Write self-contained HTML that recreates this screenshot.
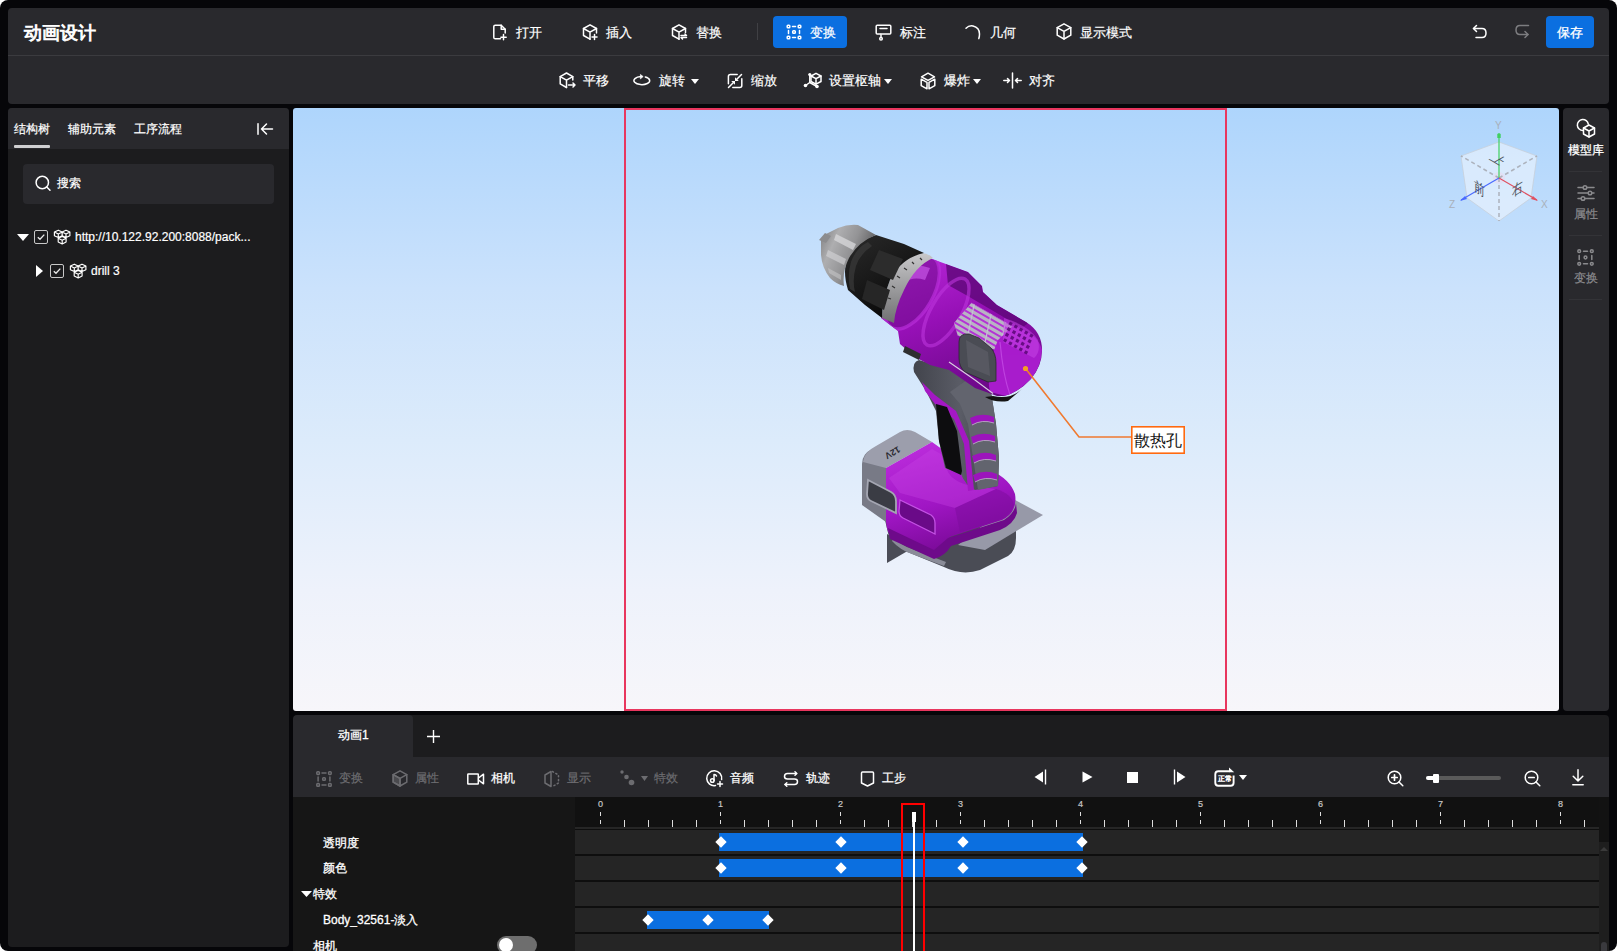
<!DOCTYPE html>
<html><head><meta charset="utf-8">
<style>
html,body{margin:0;padding:0;width:1617px;height:951px;overflow:hidden;background:#ffffff;}
body{font-family:"Liberation Sans",sans-serif;color:#fff;}
#win{position:absolute;left:0;top:0;width:1617px;height:951px;background:#060609;border-radius:8px;overflow:hidden;}
.abs{position:absolute;}
.t{position:absolute;white-space:nowrap;line-height:1;-webkit-text-stroke:0.2px currentColor;}
.b{-webkit-text-stroke:0.35px currentColor;}
.panel{position:absolute;background:#29292d;}
svg{position:absolute;overflow:visible;}
.ic{fill:none;stroke:#fff;stroke-width:1.5;stroke-linecap:round;stroke-linejoin:round;}
</style></head><body>
<div id="win">
<!--HEADER-->
  <div class="panel" style="left:8px;top:8px;width:1601px;height:96px;border-radius:4px;"></div>
  <div class="abs" style="left:8px;top:55px;width:1601px;height:1px;background:#3b3b3f;"></div>
  <div class="t" style="left:24px;top:24px;font-size:18px;-webkit-text-stroke:0.9px #fff;">动画设计</div>
  <!-- row1 -->
  <svg style="left:492px;top:24px" width="16" height="16" viewBox="0 0 16 16"><g class="ic">
    <path d="M8.5 14.8H3.2Q1.8 14.8 1.8 13.4V2.6Q1.8 1.2 3.2 1.2H9.2L13.2 5.2V9"/><path d="M9.2 1.2V5.2H13.2"/><path d="M11.5 10.5V15.8M8.9 13.2H14.2"/></g></svg>
  <div class="t" style="left:516px;top:26px;font-size:13px;">打开</div>
  <svg style="left:582px;top:24px" width="16" height="16" viewBox="0 0 16 16"><g class="ic">
    <path d="M8 15.2L1.5 11.5V4.5L8 0.8L14.5 4.5V9"/><path d="M1.5 4.5L8 8.2L14.5 4.5M8 8.2V15.2"/><path d="M12.5 10.5V15.5M10 13H15"/></g></svg>
  <div class="t" style="left:606px;top:26px;font-size:13px;">插入</div>
  <svg style="left:671px;top:24px" width="16" height="16" viewBox="0 0 16 16"><g class="ic">
    <path d="M8 15.2L1.5 11.5V4.5L8 0.8L14.5 4.5V8.5"/><path d="M1.5 4.5L8 8.2L14.5 4.5M8 8.2V15.2"/><path d="M10 11.5H15.5L14 10M15.5 13.5H10L11.5 15"/></g></svg>
  <div class="t" style="left:696px;top:26px;font-size:13px;">替换</div>
  <div class="abs" style="left:757px;top:23px;width:1px;height:17px;background:#404044;"></div>
  <div class="abs" style="left:773px;top:16px;width:74px;height:32px;background:#0b6fe0;border-radius:4px;"></div>
  <svg style="left:786px;top:24px" width="16" height="16" viewBox="0 0 16 16"><g class="ic" stroke-width="1.4">
    <rect x="1.2" y="1.2" width="2.6" height="2.6" rx="0.8"/><rect x="12.2" y="1.2" width="2.6" height="2.6" rx="0.8"/><rect x="1.2" y="12.2" width="2.6" height="2.6" rx="0.8"/><rect x="12.2" y="12.2" width="2.6" height="2.6" rx="0.8"/><rect x="6.7" y="6.7" width="2.6" height="2.6" rx="0.8"/>
    <path d="M6.5 2.5H9.5M6.5 13.5H9.5M2.5 6.5V9.5M13.5 6.5V9.5"/></g></svg>
  <div class="t" style="left:810px;top:26px;font-size:13px;">变换</div>
  <svg style="left:875px;top:24px" width="17" height="17" viewBox="0 0 17 17"><g class="ic">
    <path d="M5.5 10H2.2Q1.2 10 1.2 9V2.2Q1.2 1.2 2.2 1.2H14.8Q15.8 1.2 15.8 2.2V9Q15.8 10 14.8 10H6.8"/><path d="M5 4.5H12"/><path d="M6 10V13"/><circle cx="6" cy="14.8" r="1.3"/></g></svg>
  <div class="t" style="left:900px;top:26px;font-size:13px;">标注</div>
  <svg style="left:965px;top:24px" width="16" height="16" viewBox="0 0 16 16"><g class="ic">
    <path d="M1 4.3Q4 1.2 8 2Q14.5 3.5 14.5 10Q14.5 12.8 13.8 14.6"/></g></svg>
  <div class="t" style="left:990px;top:26px;font-size:13px;">几何</div>
  <svg style="left:1056px;top:23px" width="16" height="17" viewBox="0 0 16 17"><g class="ic">
    <path d="M8 16L1.2 12.2V4.6L8 0.8L14.8 4.6V12.2Z"/><path d="M1.2 4.6L8 8.4L14.8 4.6M8 8.4V16"/></g></svg>
  <div class="t" style="left:1080px;top:26px;font-size:13px;">显示模式</div>
  <!-- right controls -->
  <svg style="left:1472px;top:24px" width="16" height="16" viewBox="0 0 16 16"><g class="ic" stroke-width="1.4">
    <path d="M4.5 1.5L1.5 4.5L4.5 7.5"/><path d="M1.5 4.5H10Q14 4.5 14 9Q14 13.5 10 13.5H4"/></g></svg>
  <svg style="left:1514px;top:24px" width="16" height="16" viewBox="0 0 16 16"><g class="ic" style="stroke:#7d7d80" stroke-width="1.4">
    <path d="M14.5 1.5H6Q2 1.5 2 6Q2 10.5 6 10.5H14"/><path d="M11 7.5L14 10.5L11 13.5"/></g></svg>
  <div class="abs" style="left:1546px;top:16px;width:48px;height:32px;background:#0b6fe0;border-radius:4px;"></div>
  <div class="t" style="left:1557px;top:26px;font-size:13px;-webkit-text-stroke:0.3px #fff;">保存</div>
  <!-- row2 -->
  <svg style="left:559px;top:72px" width="17" height="17" viewBox="0 0 17 17"><g class="ic">
    <path d="M7.5 15.5L1.2 11.8V4.6L7.5 1L13.8 4.6V8"/><path d="M1.2 4.6L7.5 8.2L13.8 4.6M7.5 8.2V15.5"/><path d="M9.5 13H16M14 11L16 13L14 15"/></g></svg>
  <div class="t" style="left:583px;top:74px;font-size:13px;">平移</div>
  <svg style="left:633px;top:72px" width="17" height="17" viewBox="0 0 17 17"><path d="M12.3 5A7.9 4.05 0 1 1 8 4.6" fill="none" stroke="#fff" stroke-width="1.5" stroke-linecap="round"/><path d="M7.4 2.4L10.2 4.6L7.4 6.9Z" fill="#fff" stroke="#fff" stroke-width="0.6" stroke-linejoin="round"/></svg>
  <div class="t" style="left:659px;top:74px;font-size:13px;">旋转</div>
  <svg style="left:691px;top:79px" width="8" height="5" viewBox="0 0 8 5"><path d="M0 0H8L4 5Z" fill="#fff"/></svg>
  <svg style="left:727px;top:72px" width="16" height="17" viewBox="0 0 16 17"><g class="ic">
    <path d="M1.4 11.7V4.4Q1.4 2.4 3.4 2.4H10.2"/><path d="M14.8 6.8V13.6Q14.8 15.6 12.8 15.6H5.8"/><path d="M14.5 2.5L9.8 7.2M1.5 15.5L6.2 10.8"/></g>
    <path d="M8 5.2V9H11.8Z M4.2 9H8V12.8Z" fill="#fff"/></svg>
  <div class="t" style="left:751px;top:74px;font-size:13px;">缩放</div>
  <svg style="left:803px;top:72px" width="19" height="17" viewBox="0 0 19 17"><g class="ic">
    <path d="M13 1.3L18 4V9.5L13 12.2L8 9.5V4Z"/><path d="M8 4L13 6.7L18 4M13 6.7V12.2"/><path d="M6.8 2.5V10.5L2.5 13.5M6.8 10.5L14 14.5"/></g>
    <circle cx="6.8" cy="2.5" r="1.6" fill="#fff"/><circle cx="2.5" cy="13.5" r="1.8" fill="#fff"/><circle cx="14" cy="14.5" r="1.8" fill="#fff"/></svg>
  <div class="t" style="left:829px;top:74px;font-size:13px;">设置枢轴</div>
  <svg style="left:884px;top:79px" width="8" height="5" viewBox="0 0 8 5"><path d="M0 0H8L4 5Z" fill="#fff"/></svg>
  <svg style="left:920px;top:72px" width="16" height="18" viewBox="0 0 16 18"><g class="ic">
    <path d="M8 1.2L14.5 4.8L8 8.4L1.5 4.8Z"/><path d="M1.2 7.2L7 10.4V16.8L1.2 13.6Z"/><path d="M14.8 7.2L9 10.4V16.8L14.8 13.6Z"/></g></svg>
  <div class="t" style="left:944px;top:74px;font-size:13px;">爆炸</div>
  <svg style="left:973px;top:79px" width="8" height="5" viewBox="0 0 8 5"><path d="M0 0H8L4 5Z" fill="#fff"/></svg>
  <svg style="left:1003px;top:72px" width="19" height="17" viewBox="0 0 19 17"><g class="ic">
    <path d="M9.5 1V16"/><path d="M0.8 8.5H6.5M4.5 6.5L6.5 8.5L4.5 10.5"/><path d="M18.2 8.5H12.5M14.5 6.5L12.5 8.5L14.5 10.5"/></g></svg>
  <div class="t" style="left:1029px;top:74px;font-size:13px;">对齐</div>
<!--/HEADER-->
<!--LEFT-->
  <div class="abs" style="left:8px;top:108px;width:281px;height:839px;background:#1c1c1e;border-radius:4px;overflow:hidden;">
    <div class="abs" style="left:0;top:0;width:281px;height:41px;background:#29292d;"></div>
  </div>
  <div class="t" style="left:14px;top:123px;font-size:12px;">结构树</div>
  <div class="t" style="left:68px;top:123px;font-size:12px;">辅助元素</div>
  <div class="t" style="left:134px;top:123px;font-size:12px;">工序流程</div>
  <div class="abs" style="left:14px;top:145px;width:36px;height:3px;background:#d0d0d2;border-radius:1px;"></div>
  <svg style="left:257px;top:123px" width="16" height="12" viewBox="0 0 16 12"><g class="ic" stroke-width="1.5">
    <path d="M1 0.8V11.2"/><path d="M4.5 6H15.5M9.5 1L4.5 6L9.5 11"/></g></svg>
  <div class="abs" style="left:23px;top:164px;width:251px;height:40px;background:#29292d;border-radius:4px;"></div>
  <svg style="left:35px;top:175px" width="17" height="17" viewBox="0 0 17 17"><g class="ic" stroke-width="1.5">
    <circle cx="7.3" cy="7.5" r="6.2"/><path d="M11.8 12L15 15.3"/></g></svg>
  <div class="t" style="left:57px;top:177px;font-size:12px;">搜索</div>
  <!-- tree -->
  <svg style="left:17px;top:234px" width="12" height="7" viewBox="0 0 12 7"><path d="M0 0H12L6 7Z" fill="#fff"/></svg>
  <div class="abs" style="left:34px;top:230px;width:12px;height:12px;border:1px solid #c8c8c8;border-radius:2px;"></div>
  <svg style="left:34px;top:230px" width="14" height="14" viewBox="0 0 14 14"><path d="M3.8 7.2L6 9.3L10.3 4.6" fill="none" stroke="#e8e8e8" stroke-width="1.35"/></svg>
  <svg style="left:54px;top:230px" width="17" height="15" viewBox="0 0 17 15"><path d="M4.3 0.2L8.2 2.0V5.8L4.3 7.6L0.4 5.8V2.0ZM0.4 2.0L4.3 3.9L8.2 2.0M4.3 3.9V7.6M12.0 0.2L15.9 2.0V5.8L12.0 7.6L8.1 5.8V2.0ZM8.1 2.0L12.0 3.9L15.9 2.0M12.0 3.9V7.6M8.2 6.5L12.1 8.3V12.0L8.2 13.9L4.2 12.0V8.3ZM4.2 8.3L8.2 10.2L12.1 8.3M8.2 10.2V13.9" fill="none" stroke="#fff" stroke-width="1.15" stroke-linejoin="round"/></svg>
  <div class="t" style="left:75px;top:231px;font-size:12px;">http://10.122.92.200:8088/pack...</div>
  <svg style="left:36px;top:265px" width="7" height="12" viewBox="0 0 7 12"><path d="M0 0V12L7 6Z" fill="#fff"/></svg>
  <div class="abs" style="left:50px;top:264px;width:12px;height:12px;border:1px solid #c8c8c8;border-radius:2px;"></div>
  <svg style="left:50px;top:264px" width="14" height="14" viewBox="0 0 14 14"><path d="M3.8 7.2L6 9.3L10.3 4.6" fill="none" stroke="#e8e8e8" stroke-width="1.35"/></svg>
  <svg style="left:70px;top:264px" width="17" height="15" viewBox="0 0 17 15"><path d="M4.3 0.2L8.2 2.0V5.8L4.3 7.6L0.4 5.8V2.0ZM0.4 2.0L4.3 3.9L8.2 2.0M4.3 3.9V7.6M12.0 0.2L15.9 2.0V5.8L12.0 7.6L8.1 5.8V2.0ZM8.1 2.0L12.0 3.9L15.9 2.0M12.0 3.9V7.6M8.2 6.5L12.1 8.3V12.0L8.2 13.9L4.2 12.0V8.3ZM4.2 8.3L8.2 10.2L12.1 8.3M8.2 10.2V13.9" fill="none" stroke="#fff" stroke-width="1.15" stroke-linejoin="round"/></svg>
  <div class="t" style="left:91px;top:265px;font-size:12px;">drill 3</div>
<!--/LEFT-->
<!--VIEWPORT-->
  <div class="abs" style="left:293px;top:108px;width:1266px;height:603px;border-radius:3px;background:linear-gradient(#aed5fc 0%,#cbe2fc 30%,#dcebfb 55%,#eef2fb 80%,#f7f6fa 100%);overflow:hidden;"></div>
  <div class="abs" style="left:624px;top:108px;width:599px;height:599px;border:2px solid #e8365e;"></div>
<!--DRILL-->
  <svg style="left:0;top:0" width="1617" height="951" viewBox="0 0 1617 951">
    <defs>
      <linearGradient id="gChuck" x1="0" y1="0" x2="1" y2="0.5">
        <stop offset="0" stop-color="#7a7a7c"/><stop offset="0.3" stop-color="#aeaeb0"/><stop offset="0.6" stop-color="#939395"/><stop offset="1" stop-color="#505052"/>
      </linearGradient>
      <linearGradient id="gBlack" x1="0" y1="0" x2="0.6" y2="1">
        <stop offset="0" stop-color="#2a2a2a"/><stop offset="0.5" stop-color="#1a1a1a"/><stop offset="1" stop-color="#080808"/>
      </linearGradient>
      <linearGradient id="gPurp" x1="0.2" y1="0" x2="0.6" y2="1">
        <stop offset="0" stop-color="#b626d6"/><stop offset="0.45" stop-color="#9610b6"/><stop offset="1" stop-color="#6a0886"/>
      </linearGradient>
      <linearGradient id="gBat" x1="0" y1="0" x2="0.3" y2="1">
        <stop offset="0" stop-color="#c030e0"/><stop offset="0.6" stop-color="#a016c4"/><stop offset="1" stop-color="#7a0a98"/>
      </linearGradient>
      <linearGradient id="gHandle" x1="0" y1="0" x2="1" y2="0">
        <stop offset="0" stop-color="#42444c"/><stop offset="0.55" stop-color="#5a5c66"/><stop offset="1" stop-color="#3c3e46"/>
      </linearGradient>
      <linearGradient id="gRing" x1="0" y1="0" x2="0" y2="1">
        <stop offset="0" stop-color="#c8c8ca"/><stop offset="1" stop-color="#707072"/>
      </linearGradient>
    </defs>
    <!-- battery -->
    <polygon points="887,534 887,563 911,549" fill="#4a4c56"/>
    <path d="M885,520 L889,537 Q893,546 905,551 L944,567 Q962,576 980,570 L1008,556 Q1016,551 1016,538 L1016,505 L947,530 Z" fill="#4a4c55"/>
    <path d="M892,541 Q900,550 912,554 L944,566 L946,562 L912,549 Q900,545 894,537 Z" fill="#8a8c98"/>
    <polygon points="958,545 1015,500 1043,515 985,550" fill="#9799a8"/>
    <path d="M862,505 L862,464 Q862,454 872,449 L886,466 L886,522 Z" fill="#787a86"/>
    <path d="M863,462 Q864,452 876,446 L900,432 Q907,428 915,432 L932,442 L886,468 Z" fill="#9c9eac"/>
    
    <path d="M886,468 L932,442 L946,452 L990,470 Q1010,479 1015,494 Q1018,512 1002,520 L968,531 L950,537 Q946,548 940,553 L930,556 L893,538 Q887,534 886,522 Z" fill="url(#gBat)"/>
    <path d="M889,478 L932,449 L946,457 L947,470 Q952,482 972,486 L996,489 L955,508 L900,493 Z" fill="#c844e6" opacity="0.35"/>
    <path d="M955,508 L996,489 Q1012,494 1014,505 Q1010,516 998,520 L960,532 Z" fill="#7c0c9c" opacity="0.5"/>
    <path d="M888,528 L934,550 L948,538 L1004,520 Q1015,513 1016,503 L1017,513 Q1014,524 1000,530 L951,546 Q945,556 934,559 L890,539 Z" fill="#6e0a8a"/>
    <path d="M900,500 L931,515 Q935,518 935,523 L935,534 L903,518 Q899,516 899,511 Z" fill="#6a0a88" stroke="#c452e4" stroke-width="1.3"/>
    <path d="M868,480 L891,492 Q896,495 896,501 L896,513 L871,501 Q867,499 867,494 Z" fill="#3a3c44" stroke="#a4a6b2" stroke-width="1.8"/>
    <text x="0" y="0" font-size="9" fill="#2a2a30" font-family="Liberation Sans" font-weight="bold" transform="translate(898,446) rotate(150)">12V</text>
    <!-- handle -->
    <path d="M914,372 Q912,362 919,360 L929,363 L947,362 L971,377 L991,392 L996,424 L999,458 L998,486 L975,490 Q965,485 961,474 L945,468 L939,441 L936,411 L926,391 Z" fill="url(#gHandle)"/>
    <path d="M950,392 L971,377 L991,392 L996,424 L999,458 L998,486 L978,490 L973,458 L968,424 L960,404 Z" fill="#62646e"/>
    <path d="M922,382 L935,395 L956,411 L969,441 L974,490 L968,491 L964,444 L954,419 L935,404 L925,391 Z" fill="#a418c4"/>
    <path d="M936,404 L947,407 L957,431 L962,471 L961,475 L946,468 L939,441 Z" fill="#0d0d0f"/>
    <g fill="#9c14bc">
      <path d="M970,418 Q982,412 994,417 L994,423 Q982,419 972,425 Z"/>
      <path d="M971,437 Q983,431 995,436 L995,442 Q983,438 973,444 Z"/>
      <path d="M972,456 Q984,450 996,455 L996,461 Q984,457 974,463 Z"/>
      <path d="M973,475 Q985,469 997,474 L997,480 Q985,476 975,482 Z"/>
    </g>
    <g fill="none" stroke="#c8c8d0" stroke-width="0.9" opacity="0.8">
      <path d="M972,425 Q982,419 994,423 M973,444 Q983,438 995,442 M974,463 Q984,457 996,461 M975,482 Q985,476 997,480"/>
    </g>
    <!-- housing -->
    <clipPath id="cHousing"><path d="M921,256 L932,259 L946,264 L968,272 L982,286 L983,292 L997,305 L1026,322 Q1042,332 1042,350 Q1042,366 1031,379 Q1018,393 1004,396 L997,396 L975,388 L949,370 L930,365 L915,357 L900,344 L898,331 L881,318 Z"/></clipPath>
    <path d="M921,256 L932,259 L946,264 L968,272 L982,286 L983,292 L997,305 L1026,322 Q1042,332 1042,350 Q1042,366 1031,379 Q1018,393 1004,396 L997,396 L975,388 L949,370 L930,365 L915,357 L900,344 L898,331 L881,318 Z" fill="url(#gPurp)"/>
    <g clip-path="url(#cHousing)">
    <path d="M946,264 L968,272 L982,286 L983,292 L997,305 L1028,323 L1022,328 L995,312 L966,295 L948,285 Z" fill="#5e0878" opacity="0.8"/>
    <ellipse cx="912" cy="292" rx="21" ry="41" transform="rotate(30 912 292)" fill="#6a0a86" fill-opacity="0.5" stroke="#b82ed8" stroke-opacity="0.7" stroke-width="3.5"/>
    <ellipse cx="946" cy="312" rx="15" ry="38" transform="rotate(30 946 312)" fill="none" stroke="#bc36dc" stroke-width="3.5" opacity="0.6"/>
    <path d="M902,270 Q915,262 930,268 L925,280 Q912,276 905,283 Z" fill="#d060f0" opacity="0.6"/>
    <clipPath id="cMotor"><polygon points="954,323 971.5,302.7 1015.7,327.9 1005.6,341.8 996.7,350.6 957.7,335.5"/></clipPath>
    <polygon points="954,323 971.5,302.7 1015.7,327.9 1005.6,341.8 996.7,350.6 957.7,335.5" fill="#b8b4c4"/>
    <g clip-path="url(#cMotor)" stroke="#b424d8" stroke-width="2" opacity="0.9">
      <path d="M940,278 L1020,324 M940,284 L1020,330 M940,290 L1020,336 M940,296 L1020,342 M940,302 L1020,348 M940,308 L1020,354 M940,314 L1020,360 M940,320 L1020,366 M940,326 L1020,372 M940,332 L1020,378 M940,338 L1020,384 M940,344 L1020,390"/>
      <path d="M975,300 L966,345 M992,310 L983,352 M1006,320 L998,356" stroke-width="1.2" stroke="#c8c0d8"/>
    </g>
    <path d="M998,340 L1013,326 Q1038,333 1042,350 Q1041,368 1030,380 Q1018,392 1006,396 L990,392 Q985,370 998,340 Z" fill="#a81ccc"/>
    <path d="M1004,318 Q1030,326 1038,340 Q1041,352 1034,358 L1003,342 Z" fill="#c446e6" opacity="0.55"/>
    <g fill="#5a0676" opacity="0.85"><rect x="1009.0" y="322.0" width="3.2" height="3.2" transform="rotate(30 1010.6 323.6)"/><rect x="1007.2" y="327.6" width="3.2" height="3.2" transform="rotate(30 1008.8 329.2)"/><rect x="1005.4" y="333.2" width="3.2" height="3.2" transform="rotate(30 1007.0 334.8)"/><rect x="1003.6" y="338.8" width="3.2" height="3.2" transform="rotate(30 1005.2 340.4)"/><rect x="1014.2" y="325.0" width="3.2" height="3.2" transform="rotate(30 1015.8 326.6)"/><rect x="1012.4" y="330.6" width="3.2" height="3.2" transform="rotate(30 1014.0 332.2)"/><rect x="1010.6" y="336.2" width="3.2" height="3.2" transform="rotate(30 1012.2 337.8)"/><rect x="1008.8" y="341.8" width="3.2" height="3.2" transform="rotate(30 1010.4 343.4)"/><rect x="1019.4" y="328.0" width="3.2" height="3.2" transform="rotate(30 1021.0 329.6)"/><rect x="1017.6" y="333.6" width="3.2" height="3.2" transform="rotate(30 1019.2 335.2)"/><rect x="1015.8" y="339.2" width="3.2" height="3.2" transform="rotate(30 1017.4 340.8)"/><rect x="1014.0" y="344.8" width="3.2" height="3.2" transform="rotate(30 1015.6 346.4)"/><rect x="1024.6" y="331.0" width="3.2" height="3.2" transform="rotate(30 1026.2 332.6)"/><rect x="1022.8" y="336.6" width="3.2" height="3.2" transform="rotate(30 1024.4 338.2)"/><rect x="1021.0" y="342.2" width="3.2" height="3.2" transform="rotate(30 1022.6 343.8)"/><rect x="1019.2" y="347.8" width="3.2" height="3.2" transform="rotate(30 1020.8 349.4)"/><rect x="1029.8" y="334.0" width="3.2" height="3.2" transform="rotate(30 1031.4 335.6)"/><rect x="1028.0" y="339.6" width="3.2" height="3.2" transform="rotate(30 1029.6 341.2)"/><rect x="1026.2" y="345.2" width="3.2" height="3.2" transform="rotate(30 1027.8 346.8)"/><rect x="1024.4" y="350.8" width="3.2" height="3.2" transform="rotate(30 1026.0 352.4)"/></g>
    <path d="M1000,342 Q1003,375 1010,395" fill="none" stroke="#c850e8" stroke-width="1.2" opacity="0.7"/>
    <path d="M959,342 Q959,333 969,334 L979,338 L991,348 Q996,354 996,363 L996,381 L988,382 L965,372 Q959,367 959,358 Z" fill="#4a4c54" stroke="#2a2a2e" stroke-width="0.8"/>
    <path d="M966,340 L988,352 L990,376 L968,367 Z" fill="#5c5e66" opacity="0.7"/>
    </g>
    <polyline points="949,362 975,380 993,393.5" fill="none" stroke="#d8d0e0" stroke-width="1.1"/>
    <path d="M993,396 Q1010,400 1022,389 L1008,401 Q995,403 985,397 Z" fill="#141414"/>
    <path d="M905,346 L921,354 L919,360 L903,352 Z" fill="#2e2e30"/>
    <!-- silver ring -->
    <path d="M921,253 Q928,253 933,258 Q915,266 904,290 Q895,308 894,323 L882,318 Q882,300 890,280 Q901,258 921,253 Z" fill="url(#gRing)"/>
    <g stroke="#333" stroke-width="1.2"><path d="M888,298 L891,299 M892,286 L895,288 M897,276 L900,278 M904,268 L907,270 M912,262 L914,264 M920,258 L922,260"/></g>
    <!-- black collar -->
    <path d="M876,235 L904,244 L924,253 Q901,258 890,280 Q882,300 882,318 L865,305 L848,290 Q842,270 848,258 Q858,240 876,235 Z" fill="url(#gBlack)"/>
    <path d="M879,250 L903,259 L893,280 L870,270 Z" fill="#2c2c2c"/>
    <path d="M867,280 L890,290 L884,310 L862,299 Z" fill="#262626"/>
    <path d="M851,262 Q856,248 868,242 L872,246 Q860,254 856,266 Q852,280 855,292 L850,289 Q847,275 851,262 Z" fill="#3a3a3a" opacity="0.7"/>
    <!-- silver chuck -->
    <path d="M821,240 L826,234 L838,228 Q848,224 858,225 L876,235 Q858,242 849,258 Q842,272 844,286 Q836,284 830,278 Q822,268 821,255 Z" fill="url(#gChuck)"/>
    <path d="M819,240 L825,233 L831,236 L826,243 Z" fill="#8c8c8e"/>
    <path d="M836,234 L856,244 L853,250 L834,240 Z" fill="#d6d6d8" opacity="0.8"/>
    <path d="M828,250 L846,259 L844,265 L826,256 Z" fill="#cfcfd1" opacity="0.7"/>
    <path d="M828,268 L841,275 L841,280 L829,273 Z" fill="#c4c4c6" opacity="0.6"/>
  </svg>
<!--/DRILL-->
  <!-- callout -->
  <svg style="left:0;top:0" width="1617" height="951" viewBox="0 0 1617 951">
    <polyline points="1025.5,368.5 1079,437 1131,437" fill="none" stroke="#f07a30" stroke-width="1.6"/>
    <circle cx="1025.5" cy="368.5" r="2.6" fill="#f5a020"/>
    <rect x="1131.8" y="426.8" width="52.4" height="26.4" fill="#ffffff" stroke="#ff6a10" stroke-width="1.6"/>
    <text x="1134" y="446" font-size="15.5" font-weight="300" fill="#111" font-family="Liberation Sans">散热孔</text>
  </svg>
  <!-- gizmo -->
  <svg style="left:0;top:0" width="1617" height="951" viewBox="0 0 1617 951">
    <path d="M1499,142 L1537,156 L1531,198 L1499,221 L1467,198 L1461,156 Z" fill="#eef5fd" fill-opacity="0.6" stroke="#c8d0da" stroke-width="0.8"/>
    <circle cx="1499" cy="178" r="6" fill="#e8d8f0" opacity="0.6"/>
    <path d="M1499,178 L1461,156 M1499,178 L1537,156 M1499,178 L1499,221" stroke="#a4a8b0" stroke-width="1.5" stroke-dasharray="4 3" fill="none" opacity="0.85"/>
    <line x1="1499" y1="178" x2="1499" y2="135" stroke="#40d060" stroke-width="1.2"/>
    <path d="M1497.3,138 L1500.7,138 L1500.7,134 L1499,133 L1497.3,134Z" fill="#40d060"/>
    <line x1="1499" y1="178" x2="1461" y2="200" stroke="#4a6aff" stroke-width="1.2"/>
    <path d="M1460,201 L1465,196 L1467,199 Z" fill="#4a6aff"/>
    <line x1="1499" y1="178" x2="1537" y2="200" stroke="#e05060" stroke-width="1.2"/>
    <path d="M1538,201 L1533,196 L1531,199 Z" fill="#e05060"/>
    <text x="1495" y="129" font-size="10" fill="#a8b0ba" font-family="Liberation Sans">Y</text>
    <text x="1449" y="208" font-size="10" fill="#a8b0ba" font-family="Liberation Sans">Z</text>
    <text x="1541" y="208" font-size="10" fill="#a8b0ba" font-family="Liberation Sans">X</text>
    <g fill="#4a525a" font-family="Liberation Sans" font-size="15" text-anchor="middle" dominant-baseline="central" font-weight="300">
      <text transform="matrix(0.75 0.43 -0.75 0.43 1499 160)">上</text>
      <text transform="matrix(0.72 0.46 0 0.95 1480 189)">前</text>
      <text transform="matrix(0.72 -0.46 0 0.95 1518 189)">右</text>
    </g>
  </svg>
<!--/VIEWPORT-->
<!--RIGHT-->
  <div class="panel" style="left:1563px;top:108px;width:46px;height:603px;border-radius:4px;"></div>
  <svg style="left:1576px;top:119px" width="20" height="19" viewBox="0 0 20 19"><g class="ic" stroke-width="1.3">
    <path d="M7 11.5A5.5 5.5 0 1 1 12.3 5.2"/><path d="M13 6L18.5 9V15L13 18L7.5 15V9Z"/><path d="M7.5 9L13 12L18.5 9M13 12V18"/></g></svg>
  <div class="t" style="left:1568px;top:144px;font-size:12px;-webkit-text-stroke:0.3px #fff;">模型库</div>
  <div class="abs" style="left:1569px;top:171px;width:33px;height:1px;background:#333337;"></div>
  <svg style="left:1577px;top:184px" width="18" height="18" viewBox="0 0 18 18"><g class="ic" style="stroke:#8a8a8d" stroke-width="1.2">
    <path d="M1 3.5H6M10 3.5H17M1 9H11M15 9H17M1 14.5H4M8 14.5H17"/><circle cx="8" cy="3.5" r="1.8"/><circle cx="13" cy="9" r="1.8"/><circle cx="6" cy="14.5" r="1.8"/></g></svg>
  <div class="t" style="left:1574px;top:208px;font-size:12px;color:#8a8a8d;">属性</div>
  <div class="abs" style="left:1569px;top:235px;width:33px;height:1px;background:#333337;"></div>
  <svg style="left:1577px;top:249px" width="17" height="17" viewBox="0 0 17 17"><g class="ic" style="stroke:#8a8a8d" stroke-width="1.2">
    <circle cx="2.2" cy="2.2" r="1.4"/><circle cx="14.8" cy="2.2" r="1.4"/><circle cx="2.2" cy="14.8" r="1.4"/><circle cx="14.8" cy="14.8" r="1.4"/><circle cx="8.5" cy="8.5" r="1.4"/>
    <path d="M6.5 2.2H10.5M6.5 14.8H10.5M2.2 6.5V10.5M14.8 6.5V10.5"/></g></svg>
  <div class="t" style="left:1574px;top:272px;font-size:12px;color:#8a8a8d;">变换</div>
  <div class="abs" style="left:1569px;top:299px;width:33px;height:1px;background:#333337;"></div>
<!--/RIGHT-->
<!--BOTTOM-->
  <div class="abs" style="left:293px;top:715px;width:1316px;height:236px;background:#1c1c1e;border-radius:4px 4px 0 0;overflow:hidden;">
    <div class="abs" style="left:0;top:0;width:120px;height:42px;background:#29292d;border-radius:4px 4px 0 0;"></div>
    <div class="abs" style="left:0;top:42px;width:1316px;height:40px;background:#29292d;"></div>
    <div class="abs" style="left:0;top:82px;width:282px;height:160px;background:#161616;"></div>
    <div class="abs" style="left:282px;top:82px;width:1024px;height:30px;background:#111111;"></div>
    <div class="abs" style="left:282px;top:112px;width:1024px;height:130px;background:#0e0e0e;"></div>
    <div class="abs" style="left:282px;top:112px;width:1024px;height:2px;background:#262626;"></div>
    <div class="abs" style="left:1306px;top:82px;width:10px;height:45px;background:#121212;"></div>
    <div class="abs" style="left:1306px;top:127px;width:10px;height:115px;background:#1e1e1e;"></div>
  </div>
  <div class="t" style="left:338px;top:729px;font-size:12px;-webkit-text-stroke:0.3px #fff;">动画1</div>
  <svg style="left:427px;top:730px" width="13" height="13" viewBox="0 0 13 13"><path d="M6.5 0V13M0 6.5H13" stroke="#fff" stroke-width="1.4"/></svg>
  <svg style="left:316px;top:771px" width="16" height="16" viewBox="0 0 16 16"><g class="ic" style="stroke:#6c6c70" stroke-width="1.3">
    <rect x="0.8" y="0.8" width="2.6" height="2.6" rx="0.8"/><rect x="12.6" y="0.8" width="2.6" height="2.6" rx="0.8"/><rect x="0.8" y="12.6" width="2.6" height="2.6" rx="0.8"/><rect x="12.6" y="12.6" width="2.6" height="2.6" rx="0.8"/><rect x="6.7" y="6.7" width="2.6" height="2.6" rx="0.8"/>
    <path d="M6 2.1H10M6 13.9H10M2.1 6V10M13.9 6V10"/></g></svg>
  <div class="t" style="left:339px;top:772px;font-size:12px;color:#6c6c70;">变换</div>
  <svg style="left:392px;top:770px" width="16" height="17" viewBox="0 0 16 17"><g class="ic" style="stroke:#6c6c70" stroke-width="1.3">
    <path d="M8 16L1.2 12.2V4.6L8 0.8L14.8 4.6V12.2Z"/><path d="M1.2 4.6L8 8.4L14.8 4.6M8 8.4V16"/><path d="M1.2 4.6V12.2L8 16V8.4Z" fill="#6c6c70" fill-opacity="0.5"/></g></svg>
  <div class="t" style="left:415px;top:772px;font-size:12px;color:#6c6c70;">属性</div>
  <svg style="left:467px;top:773px" width="18" height="12" viewBox="0 0 18 12"><g class="ic" stroke-width="1.5">
    <rect x="0.8" y="1" width="10.5" height="10" rx="0.5"/><path d="M11.5 5L16.5 1.2V10.8L11.5 7"/></g></svg>
  <div class="t" style="left:491px;top:772px;font-size:12px;-webkit-text-stroke:0.25px #fff;">相机</div>
  <svg style="left:544px;top:770px" width="16" height="18" viewBox="0 0 16 18"><g class="ic" style="stroke:#6c6c70" stroke-width="1.3">
    <path d="M7 1.5V16.5L1 13V5Z"/><path d="M8.5 1.5L14.5 5V13L8.5 16.5" stroke-dasharray="1.2 2.6"/></g></svg>
  <div class="t" style="left:567px;top:772px;font-size:12px;color:#6c6c70;">显示</div>
  <svg style="left:620px;top:770px" width="15" height="17" viewBox="0 0 15 17"><g fill="#6c6c70">
    <circle cx="2" cy="2" r="1.7"/><circle cx="6.5" cy="7" r="2.3"/><circle cx="11.5" cy="12.5" r="2.8"/></g></svg>
  <svg style="left:641px;top:776px" width="7" height="5" viewBox="0 0 7 5"><path d="M0 0H7L3.5 5Z" fill="#6c6c70"/></svg>
  <div class="t" style="left:654px;top:772px;font-size:12px;color:#6c6c70;">特效</div>
  <svg style="left:706px;top:770px" width="18" height="17" viewBox="0 0 18 17"><g class="ic" stroke-width="1.3">
    <path d="M15.6 9.5A7.5 7.5 0 1 0 9.5 15.6"/><path d="M8 10.5V4.5Q10 4.5 10.5 6"/><circle cx="6.3" cy="10.5" r="1.8"/><path d="M14 11.5V16.5M11.5 14H16.5" stroke-width="1.5"/></g></svg>
  <div class="t" style="left:730px;top:772px;font-size:12px;-webkit-text-stroke:0.25px #fff;">音频</div>
  <svg style="left:783px;top:771px" width="16" height="16" viewBox="0 0 16 16"><g class="ic" stroke-width="1.4">
    <path d="M13.5 2.5H4.5Q1.5 2.5 1.5 5.5Q1.5 8 4.5 8H11.5Q14.5 8 14.5 10.5Q14.5 13.5 11.5 13.5H2"/><path d="M12 0.8L13.8 2.5L12 4.2M3.8 11.8L2 13.5L3.8 15.2"/></g></svg>
  <div class="t" style="left:806px;top:772px;font-size:12px;-webkit-text-stroke:0.25px #fff;">轨迹</div>
  <svg style="left:860px;top:771px" width="15" height="16" viewBox="0 0 15 16"><g class="ic" stroke-width="1.3">
    <path d="M1.5 2Q1.5 1 2.5 1H12.5Q13.5 1 13.5 2V12L7.5 15L1.5 12Z"/></g></svg>
  <div class="t" style="left:882px;top:772px;font-size:12px;-webkit-text-stroke:0.25px #fff;">工步</div>
  <!-- playback -->
  <svg style="left:1034px;top:769px" width="13" height="16" viewBox="0 0 13 16"><path d="M0.5 8L9 2.5V13.5Z" fill="#fff"/><path d="M11.5 0.5V15.5" stroke="#fff" stroke-width="1.4"/></svg>
  <svg style="left:1082px;top:771px" width="11" height="12" viewBox="0 0 11 12"><path d="M0.5 0.5L10.5 6L0.5 11.5Z" fill="#fff"/></svg>
  <div class="abs" style="left:1127px;top:772px;width:11px;height:11px;background:#fff;"></div>
  <svg style="left:1173px;top:769px" width="13" height="16" viewBox="0 0 13 16"><path d="M12.5 8L4 2.5V13.5Z" fill="#fff"/><path d="M1.5 0.5V15.5" stroke="#fff" stroke-width="1.4"/></svg>
  <svg style="left:1214px;top:768px" width="22" height="19" viewBox="0 0 22 19"><path d="M19.6 7.5V14.8Q19.6 17.8 16.6 17.8H4.3Q1.3 17.8 1.3 14.8V6.3Q1.3 3.3 4.3 3.3H15.5" fill="none" stroke="#fff" stroke-width="1.9"/><path d="M15 -0.6L20.2 4.3H15Z" fill="#fff"/></svg>
  <div class="t" style="left:1218px;top:775px;font-size:14px;transform:scale(0.5);transform-origin:0 0;-webkit-text-stroke:0.9px #fff;">正常</div>
  <svg style="left:1239px;top:775px" width="8" height="5" viewBox="0 0 8 5"><path d="M0 0H8L4 5Z" fill="#fff"/></svg>
  <!-- zoom -->
  <svg style="left:1387px;top:770px" width="17" height="17" viewBox="0 0 17 17"><g class="ic" stroke-width="1.5">
    <circle cx="7.5" cy="7.5" r="6.3"/><path d="M12 12L15.8 15.8"/><path d="M7.5 4.8V10.2M4.8 7.5H10.2" stroke-width="1.7"/></g></svg>
  <div class="abs" style="left:1426px;top:776px;width:75px;height:4px;background:#5a5a5a;border-radius:2px;"></div>
  <div class="abs" style="left:1426px;top:776px;width:10px;height:4px;background:#fff;border-radius:2px 0 0 2px;"></div>
  <div class="abs" style="left:1433px;top:774px;width:6px;height:9px;background:#fff;border-radius:1px;"></div>
  <svg style="left:1524px;top:770px" width="17" height="17" viewBox="0 0 17 17"><g class="ic" stroke-width="1.5">
    <circle cx="7.5" cy="7.5" r="6.3"/><path d="M12 12L15.8 15.8"/><path d="M4.8 7.5H10.2" stroke-width="1.7"/></g></svg>
  <svg style="left:1572px;top:769px" width="12" height="17" viewBox="0 0 12 17"><g class="ic" stroke-width="1.5">
    <path d="M6 0.8V12M1.2 7.2L6 12L10.8 7.2"/><path d="M0.8 15.8H11.2"/></g></svg>
  <div class="abs" style="left:599.75px;top:812px;width:1.5px;height:4px;background:#ddd;"></div>
  <div class="abs" style="left:599.75px;top:820px;width:1.5px;height:4px;background:#ddd;"></div>
  <div class="t" style="left:590.5px;top:800px;width:20px;text-align:center;font-size:9px;color:#c8c8c8;">0</div>
  <div class="abs" style="left:623.75px;top:820px;width:1.5px;height:7px;background:#ddd;"></div>
  <div class="abs" style="left:647.75px;top:820px;width:1.5px;height:7px;background:#ddd;"></div>
  <div class="abs" style="left:671.75px;top:820px;width:1.5px;height:7px;background:#ddd;"></div>
  <div class="abs" style="left:695.75px;top:820px;width:1.5px;height:7px;background:#ddd;"></div>
  <div class="abs" style="left:719.75px;top:812px;width:1.5px;height:4px;background:#ddd;"></div>
  <div class="abs" style="left:719.75px;top:820px;width:1.5px;height:4px;background:#ddd;"></div>
  <div class="t" style="left:710.5px;top:800px;width:20px;text-align:center;font-size:9px;color:#c8c8c8;">1</div>
  <div class="abs" style="left:743.75px;top:820px;width:1.5px;height:7px;background:#ddd;"></div>
  <div class="abs" style="left:767.75px;top:820px;width:1.5px;height:7px;background:#ddd;"></div>
  <div class="abs" style="left:791.75px;top:820px;width:1.5px;height:7px;background:#ddd;"></div>
  <div class="abs" style="left:815.75px;top:820px;width:1.5px;height:7px;background:#ddd;"></div>
  <div class="abs" style="left:839.75px;top:812px;width:1.5px;height:4px;background:#ddd;"></div>
  <div class="abs" style="left:839.75px;top:820px;width:1.5px;height:4px;background:#ddd;"></div>
  <div class="t" style="left:830.5px;top:800px;width:20px;text-align:center;font-size:9px;color:#c8c8c8;">2</div>
  <div class="abs" style="left:863.75px;top:820px;width:1.5px;height:7px;background:#ddd;"></div>
  <div class="abs" style="left:887.75px;top:820px;width:1.5px;height:7px;background:#ddd;"></div>
  <div class="abs" style="left:911.75px;top:820px;width:1.5px;height:7px;background:#ddd;"></div>
  <div class="abs" style="left:935.75px;top:820px;width:1.5px;height:7px;background:#ddd;"></div>
  <div class="abs" style="left:959.75px;top:812px;width:1.5px;height:4px;background:#ddd;"></div>
  <div class="abs" style="left:959.75px;top:820px;width:1.5px;height:4px;background:#ddd;"></div>
  <div class="t" style="left:950.5px;top:800px;width:20px;text-align:center;font-size:9px;color:#c8c8c8;">3</div>
  <div class="abs" style="left:983.75px;top:820px;width:1.5px;height:7px;background:#ddd;"></div>
  <div class="abs" style="left:1007.75px;top:820px;width:1.5px;height:7px;background:#ddd;"></div>
  <div class="abs" style="left:1031.75px;top:820px;width:1.5px;height:7px;background:#ddd;"></div>
  <div class="abs" style="left:1055.75px;top:820px;width:1.5px;height:7px;background:#ddd;"></div>
  <div class="abs" style="left:1079.75px;top:812px;width:1.5px;height:4px;background:#ddd;"></div>
  <div class="abs" style="left:1079.75px;top:820px;width:1.5px;height:4px;background:#ddd;"></div>
  <div class="t" style="left:1070.5px;top:800px;width:20px;text-align:center;font-size:9px;color:#c8c8c8;">4</div>
  <div class="abs" style="left:1103.75px;top:820px;width:1.5px;height:7px;background:#ddd;"></div>
  <div class="abs" style="left:1127.75px;top:820px;width:1.5px;height:7px;background:#ddd;"></div>
  <div class="abs" style="left:1151.75px;top:820px;width:1.5px;height:7px;background:#ddd;"></div>
  <div class="abs" style="left:1175.75px;top:820px;width:1.5px;height:7px;background:#ddd;"></div>
  <div class="abs" style="left:1199.75px;top:812px;width:1.5px;height:4px;background:#ddd;"></div>
  <div class="abs" style="left:1199.75px;top:820px;width:1.5px;height:4px;background:#ddd;"></div>
  <div class="t" style="left:1190.5px;top:800px;width:20px;text-align:center;font-size:9px;color:#c8c8c8;">5</div>
  <div class="abs" style="left:1223.75px;top:820px;width:1.5px;height:7px;background:#ddd;"></div>
  <div class="abs" style="left:1247.75px;top:820px;width:1.5px;height:7px;background:#ddd;"></div>
  <div class="abs" style="left:1271.75px;top:820px;width:1.5px;height:7px;background:#ddd;"></div>
  <div class="abs" style="left:1295.75px;top:820px;width:1.5px;height:7px;background:#ddd;"></div>
  <div class="abs" style="left:1319.75px;top:812px;width:1.5px;height:4px;background:#ddd;"></div>
  <div class="abs" style="left:1319.75px;top:820px;width:1.5px;height:4px;background:#ddd;"></div>
  <div class="t" style="left:1310.5px;top:800px;width:20px;text-align:center;font-size:9px;color:#c8c8c8;">6</div>
  <div class="abs" style="left:1343.75px;top:820px;width:1.5px;height:7px;background:#ddd;"></div>
  <div class="abs" style="left:1367.75px;top:820px;width:1.5px;height:7px;background:#ddd;"></div>
  <div class="abs" style="left:1391.75px;top:820px;width:1.5px;height:7px;background:#ddd;"></div>
  <div class="abs" style="left:1415.75px;top:820px;width:1.5px;height:7px;background:#ddd;"></div>
  <div class="abs" style="left:1439.75px;top:812px;width:1.5px;height:4px;background:#ddd;"></div>
  <div class="abs" style="left:1439.75px;top:820px;width:1.5px;height:4px;background:#ddd;"></div>
  <div class="t" style="left:1430.5px;top:800px;width:20px;text-align:center;font-size:9px;color:#c8c8c8;">7</div>
  <div class="abs" style="left:1463.75px;top:820px;width:1.5px;height:7px;background:#ddd;"></div>
  <div class="abs" style="left:1487.75px;top:820px;width:1.5px;height:7px;background:#ddd;"></div>
  <div class="abs" style="left:1511.75px;top:820px;width:1.5px;height:7px;background:#ddd;"></div>
  <div class="abs" style="left:1535.75px;top:820px;width:1.5px;height:7px;background:#ddd;"></div>
  <div class="abs" style="left:1559.75px;top:812px;width:1.5px;height:4px;background:#ddd;"></div>
  <div class="abs" style="left:1559.75px;top:820px;width:1.5px;height:4px;background:#ddd;"></div>
  <div class="t" style="left:1550.5px;top:800px;width:20px;text-align:center;font-size:9px;color:#c8c8c8;">8</div>
  <div class="abs" style="left:1583.75px;top:820px;width:1.5px;height:7px;background:#ddd;"></div>
  <div class="abs" style="left:575px;top:830px;width:1024px;height:24px;background:#252525;"></div>
  <div class="abs" style="left:575px;top:856px;width:1024px;height:24px;background:#252525;"></div>
  <div class="abs" style="left:575px;top:882px;width:1024px;height:24px;background:#252525;"></div>
  <div class="abs" style="left:575px;top:908px;width:1024px;height:24px;background:#252525;"></div>
  <div class="abs" style="left:575px;top:934px;width:1024px;height:24px;background:#252525;"></div>
  <div class="abs" style="left:719px;top:833px;width:364px;height:18px;background:#0b6fe0;"></div>
  <div class="abs" style="left:716.5px;top:838px;width:8px;height:8px;background:#fff;transform:rotate(45deg);"></div>
  <div class="abs" style="left:836.5px;top:838px;width:8px;height:8px;background:#fff;transform:rotate(45deg);"></div>
  <div class="abs" style="left:958.5px;top:838px;width:8px;height:8px;background:#fff;transform:rotate(45deg);"></div>
  <div class="abs" style="left:1078px;top:838px;width:8px;height:8px;background:#fff;transform:rotate(45deg);"></div>
  <div class="abs" style="left:719px;top:859px;width:364px;height:18px;background:#0b6fe0;"></div>
  <div class="abs" style="left:716.5px;top:864px;width:8px;height:8px;background:#fff;transform:rotate(45deg);"></div>
  <div class="abs" style="left:836.5px;top:864px;width:8px;height:8px;background:#fff;transform:rotate(45deg);"></div>
  <div class="abs" style="left:958.5px;top:864px;width:8px;height:8px;background:#fff;transform:rotate(45deg);"></div>
  <div class="abs" style="left:1078px;top:864px;width:8px;height:8px;background:#fff;transform:rotate(45deg);"></div>
  <div class="abs" style="left:647px;top:911px;width:122px;height:18px;background:#0b6fe0;"></div>
  <div class="abs" style="left:644px;top:916px;width:8px;height:8px;background:#fff;transform:rotate(45deg);"></div>
  <div class="abs" style="left:704px;top:916px;width:8px;height:8px;background:#fff;transform:rotate(45deg);"></div>
  <div class="abs" style="left:764px;top:916px;width:8px;height:8px;background:#fff;transform:rotate(45deg);"></div>
  <div class="t" style="left:323px;top:837px;font-size:12px;-webkit-text-stroke:0.3px #fff;">透明度</div>
  <div class="t" style="left:323px;top:862px;font-size:12px;-webkit-text-stroke:0.3px #fff;">颜色</div>
  <svg style="left:301px;top:891px" width="11" height="6" viewBox="0 0 11 6"><path d="M0 0H11L5.5 6Z" fill="#fff"/></svg>
  <div class="t" style="left:313px;top:888px;font-size:12px;-webkit-text-stroke:0.3px #fff;">特效</div>
  <div class="t" style="left:323px;top:914px;font-size:12px;-webkit-text-stroke:0.3px #fff;">Body_32561-淡入</div>
  <div class="t" style="left:313px;top:940px;font-size:12px;-webkit-text-stroke:0.3px #fff;">相机</div>
  <div class="abs" style="left:497px;top:936px;width:40px;height:18px;background:#6e6e6e;border-radius:9px;"></div>
  <div class="abs" style="left:499px;top:938px;width:14px;height:14px;background:#fff;border-radius:7px;"></div>
  <!-- playhead -->
  <div class="abs" style="left:901px;top:803px;width:20px;height:160px;border:2px solid #ff0000;"></div>
  <div class="abs" style="left:912px;top:812px;width:4px;height:10px;background:#fff;"></div>
  <div class="abs" style="left:913px;top:820px;width:2px;height:140px;background:#fff;"></div>
  <!-- scrollbar -->
  <svg style="left:1600px;top:846px" width="8" height="5" viewBox="0 0 8 5"><path d="M0 5L4 1L8 5Z" fill="#3a3a3a"/></svg>
  <div class="abs" style="left:1601px;top:942px;width:6px;height:20px;background:#3a3a3e;border-radius:3px;"></div>
<!--/BOTTOM-->
</div>
</body></html>
